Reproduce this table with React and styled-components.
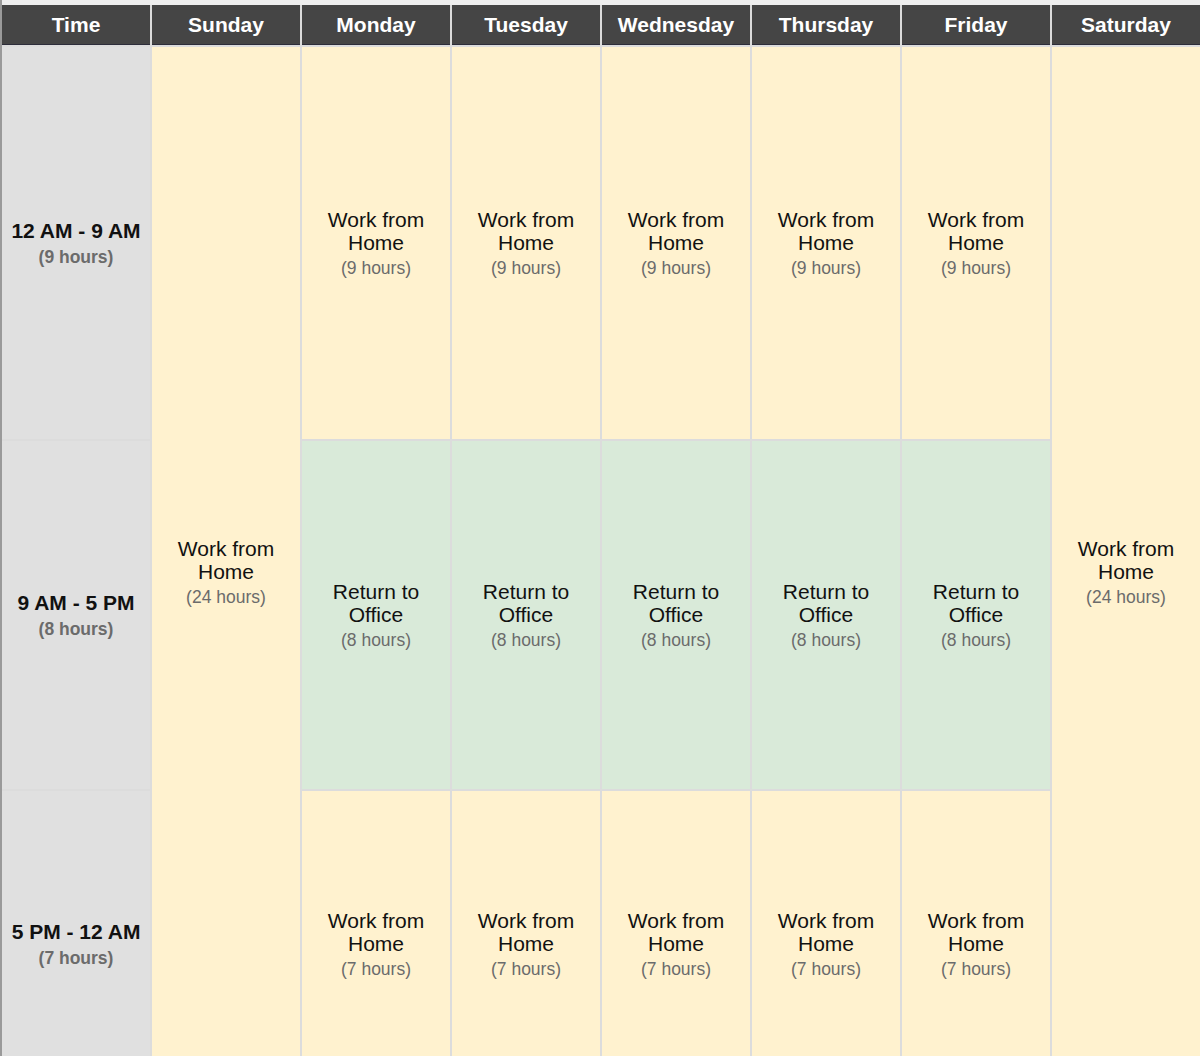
import React from 'react'
import styled, { createGlobalStyle } from 'styled-components'

const GlobalStyle = createGlobalStyle`
  html, body {
    margin: 0;
    padding: 0;
    background: #efefef;
    font-family: "Liberation Sans", Arial, Helvetica, sans-serif;
  }
`

const Page = styled.div`
  border-left: 2px solid #9a9a9a;
  padding-top: 5px;
  height: 1100px;
  overflow: hidden;
`

const Schedule = styled.div`
  display: grid;
  grid-template-columns: repeat(8, 1fr);
  grid-template-rows: 40px 392px 348px 306px;
  gap: 2px;
  background: #dcdcdc;
`

const Head = styled.div`
  background: #454545;
  color: #fff;
  font-weight: 700;
  font-size: 21px;
  display: flex;
  align-items: center;
  justify-content: center;
  padding-top: 1px;
  border-bottom: 1px solid #2d2d3a;
`

const tones = {
  home: '#fff2cf',
  office: '#d9ead9',
  time: '#e0e0e0',
}

const Cell = styled.div`
  background: ${p => tones[p.$tone]};
  grid-row: ${p => p.$span ? `2 / span ${p.$span}` : 'auto'};
  grid-column: ${p => p.$col || 'auto'};
  display: flex;
  flex-direction: column;
  align-items: center;
  justify-content: center;
  text-align: center;
  padding: 1px ${p => p.$tone === 'time' ? 2 : 12}px 0;
`

const Label = styled.div`
  font-size: 21px;
  line-height: 23px;
  color: #111;
  white-space: ${p => p.$bold ? 'nowrap' : 'normal'};
  font-weight: ${p => p.$bold ? 700 : 400};
`

const Hours = styled.div`
  font-size: 17.5px;
  line-height: 24px;
  margin-top: ${p => p.$bold ? 3 : 2}px;
  color: #6b6b6b;
  font-weight: ${p => p.$bold ? 700 : 400};
`

const days = ['Sunday', 'Monday', 'Tuesday', 'Wednesday', 'Thursday', 'Friday', 'Saturday']

const slots = [
  { time: '12 AM - 9 AM', hours: 9, tone: 'home', text: ['Work from', 'Home'] },
  { time: '9 AM - 5 PM', hours: 8, tone: 'office', text: ['Return to', 'Office'] },
  { time: '5 PM - 12 AM', hours: 7, tone: 'home', text: ['Work from', 'Home'] },
]

const Weekend = ({ col }) => (
  <Cell $tone="home" $span={3} $col={col}>
    <Label>Work from<br />Home</Label>
    <Hours>(24 hours)</Hours>
  </Cell>
)

export default function App () {
  return (
    <>
      <GlobalStyle />
      <Page>
        <Schedule>
          <Head>Time</Head>
          {days.map(d => <Head key={d}>{d}</Head>)}

          {slots.map((s, i) => (
            <React.Fragment key={s.time}>
              <Cell $tone="time" $col={1}>
                <Label $bold>{s.time}</Label>
                <Hours $bold>({s.hours} hours)</Hours>
              </Cell>
              {i === 0 && <Weekend col={2} />}
              {[3, 4, 5, 6, 7].map(c => (
                <Cell key={c} $tone={s.tone} $col={c}>
                  <Label>{s.text[0]}<br />{s.text[1]}</Label>
                  <Hours>({s.hours} hours)</Hours>
                </Cell>
              ))}
              {i === 0 && <Weekend col={8} />}
            </React.Fragment>
          ))}
        </Schedule>
      </Page>
    </>
  )
}
